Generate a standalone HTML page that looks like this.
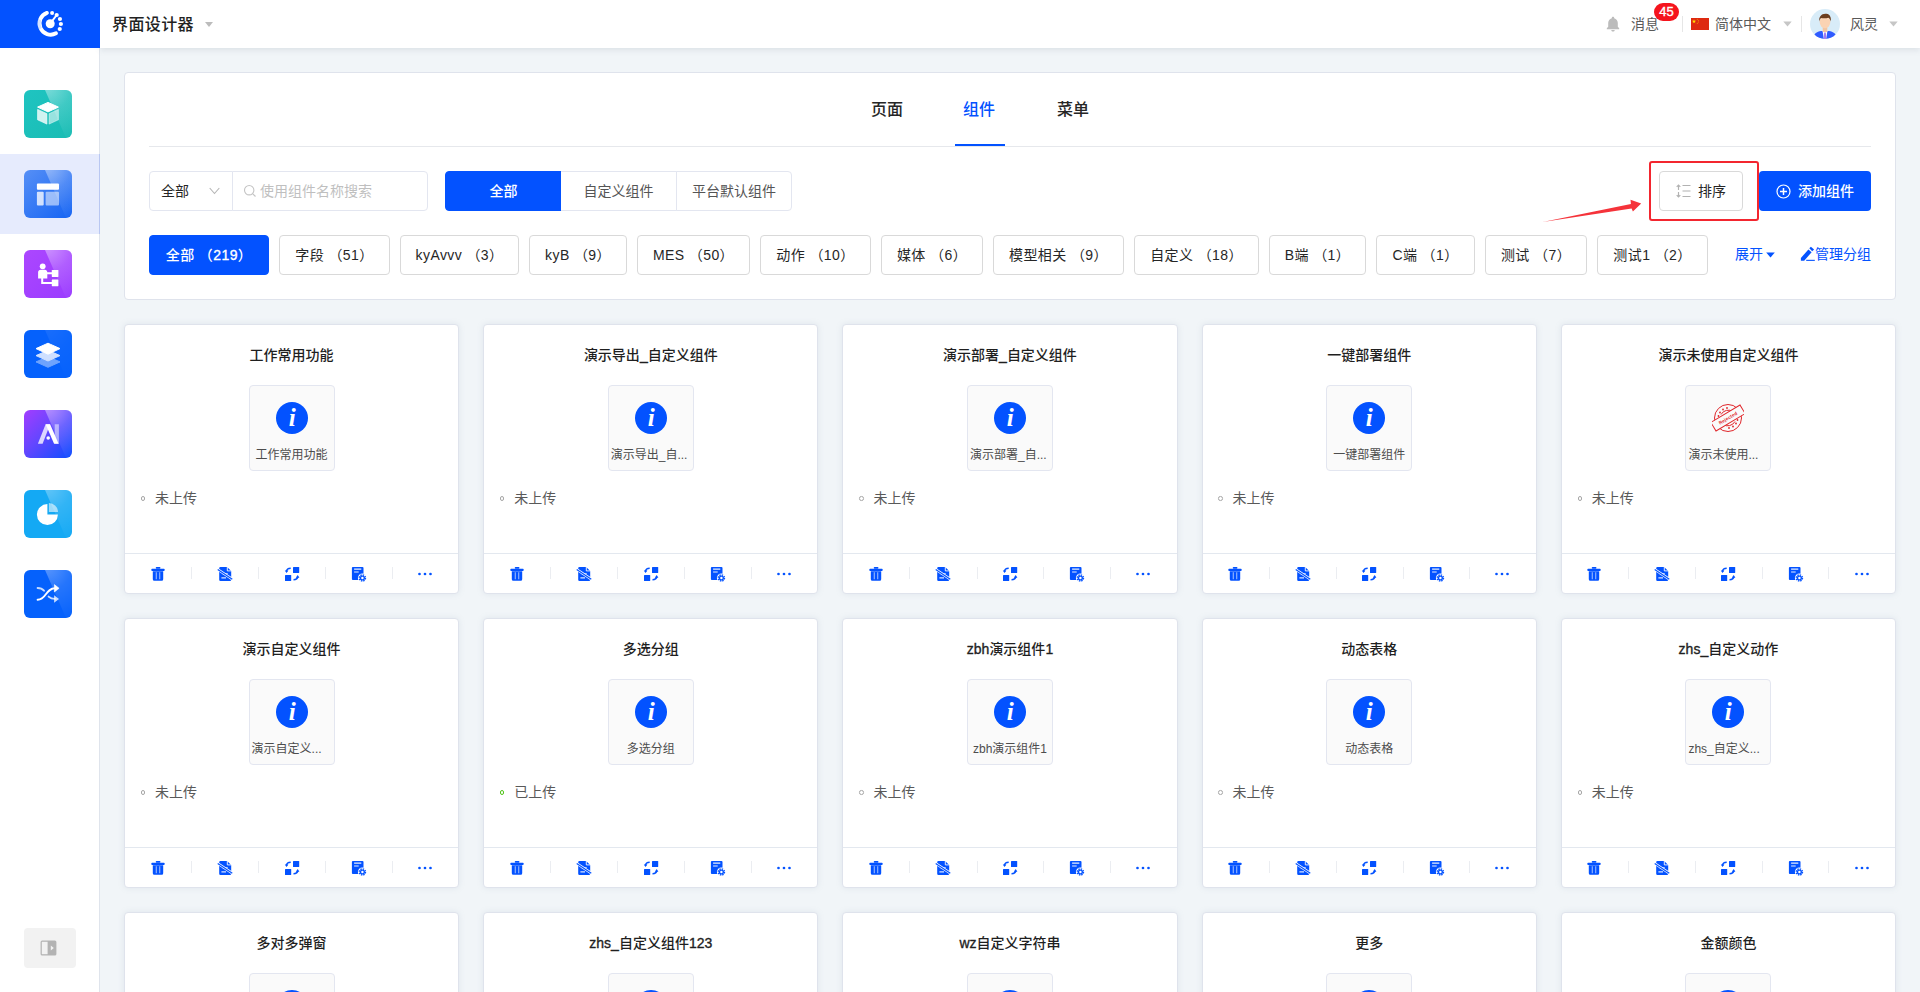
<!DOCTYPE html>
<html lang="zh-CN"><head><meta charset="utf-8"><title>界面设计器</title>
<style>
*{box-sizing:border-box;margin:0;padding:0}
html,body{width:1920px;height:992px;overflow:hidden}
body{font-family:"Liberation Sans","Noto Sans CJK SC",sans-serif;font-size:14px;color:rgba(0,0,0,.85);background:#f1f5f8;position:relative}
.abs{position:absolute}
#side{position:absolute;left:0;top:0;width:100px;height:992px;background:#fff;border-right:1px solid #dfe4ec}
#logo{position:absolute;left:0;top:0;width:100px;height:48px;background:#0352ff}
#top{position:absolute;left:100px;top:0;width:1820px;height:48px;background:#fff;box-shadow:0 2px 6px rgba(110,125,140,.17)}
#sel{position:absolute;left:0;top:154px;width:100px;height:80px;background:#e6ebfd;border-right:1px solid #b9c7f2}
.sico{position:absolute;left:24px;width:48px;height:48px;border-radius:6px;overflow:hidden}
.sico svg{display:block}
#coll{position:absolute;left:24px;top:928px;width:52px;height:40px;background:#f2f2f2;border-radius:4px}
#panel{position:absolute;left:124px;top:72px;width:1772px;height:228px;background:#fff;border:1px solid #dfe3ec;border-radius:4px}
.card{position:absolute;width:335.2px;height:270px;background:#fff;border:1px solid #dfe3ec;border-radius:4px;box-shadow:0 0 6px rgba(125,145,165,.15)}
.ctitle{position:absolute;left:0;right:0;top:19px;height:22px;line-height:22px;text-align:center;font-weight:500;font-size:14px;color:#1f1f1f}
.pv{position:absolute;left:123.600px;top:60px;width:86px;height:86px;background:#fafafa;border:1px solid #e3e6f0;border-radius:4px}
.pic{position:absolute;left:26px;top:16px;width:32px;height:32px}
.plabel{position:absolute;left:0;right:0;top:59px;height:20px;line-height:20px;text-align:center;font-size:12px;color:#4d4d4d;white-space:nowrap}
.plabel.tr{text-align:left;padding-left:2px}
.status{position:absolute;left:30px;top:162px;height:22px;line-height:22px;font-size:14px;color:#595959}
.dot{position:absolute;left:-14.300px;top:9.300px;width:4.600px;height:4.600px;border:1px solid #a6a6a6;border-radius:50%}
.dot.up{border-color:#52c41a}
.foot{position:absolute;left:0;right:0;top:228px;height:40px;border-top:1px solid #e3e8ef;display:flex}
.fc{flex:1;position:relative;color:#0352ff;display:block}
.fc+.fc:before{content:"";position:absolute;left:0;top:13px;height:12px;width:1px;background:#ebedf1}
.fc:nth-child(2):before{left:-.6px}
.fc:nth-child(1) .fi{margin-left:-8.700px}
.fc:nth-child(4) .fi{margin-left:-7.200px}
.fi{position:absolute;left:50%;top:50%;width:16px;height:16px;margin:-8px 0 0 -8px}
.lm{-webkit-text-stroke:.35px currentColor}
.tab{position:absolute;top:98px;height:24px;line-height:24px;font-size:16px;font-weight:500;color:#262626;white-space:nowrap}
.tag{position:absolute;top:235px;height:40px;line-height:38px;border:1px solid #d9d9d9;border-radius:4px;text-align:center;font-size:14px;letter-spacing:.4px;color:#262626;background:#fff;white-space:nowrap}
.tag.on{background:#0352ff;border-color:#0352ff;color:#fff;font-weight:500}
.rb{position:absolute;top:171px;height:40px;line-height:38px;text-align:center;font-size:14px;color:#555;border:1px solid #e3e6f0;background:#fff;white-space:nowrap}
.t{position:absolute;white-space:nowrap}
</style></head><body>
<svg width="0" height="0" style="position:absolute"><defs><radialGradient id="hl" gradientUnits="userSpaceOnUse" cx="23" cy="-3" r="54"><stop offset="0" stop-color="#fff" stop-opacity=".42"/><stop offset=".45" stop-color="#fff" stop-opacity=".16"/><stop offset="1" stop-color="#fff" stop-opacity=".02"/></radialGradient></defs></svg>
<div id="side">
<div id="sel"></div>
<div class="sico" style="top:90px;background:linear-gradient(135deg,#1fc4c1,#19bcb3)"><svg viewBox="0 0 48 48" width="48" height="48"><polygon points="21,0 48,0 48,48 42,48" fill="url(#hl)" opacity="1.0"/><path d="M24 12.400l10.400 4.700L24 21.900l-10.400-4.800z" fill="#fff" stroke="#fff" stroke-width="1" stroke-linejoin="round"/><path d="M13.600 19.400l9.300 4.300v10.400l-9.300-4.300z" fill="#fff" fill-opacity=".8" stroke="#fff" stroke-opacity=".8" stroke-width=".8" stroke-linejoin="round"/><path d="M34.400 19.400l-9.300 4.300v10.400l9.300-4.300z" fill="#fff" fill-opacity=".55" stroke="#fff" stroke-opacity=".55" stroke-width=".8" stroke-linejoin="round"/></svg></div><div class="sico" style="top:170px;background:linear-gradient(135deg,#568ff6,#1463f3)"><svg viewBox="0 0 48 48" width="48" height="48"><polygon points="21,0 48,0 48,48 42,48" fill="url(#hl)" opacity="1.0"/><rect x="12.900" y="13.500" width="22.100" height="6.300" rx="1" fill="#fff"/><rect x="12.900" y="21.800" width="6.800" height="13.600" rx="1" fill="#fff" opacity=".78"/><rect x="21.600" y="21.800" width="13.400" height="13.600" rx="1" fill="#fff" opacity=".52"/></svg></div><div class="sico" style="top:250px;background:linear-gradient(135deg,#ac47ff,#9a3bff)"><svg viewBox="0 0 48 48" width="48" height="48"><polygon points="21,0 48,0 48,48 42,48" fill="url(#hl)" opacity="1.0"/><circle cx="18.700" cy="16.300" r="2.900" fill="#fff"/><path d="M14.100 22.300c0-1.400 1.100-2.500 2.500-2.500h4.200c1.400 0 2.500 1.100 2.500 2.500v6.100h-9.200z" fill="#fff"/><path d="M23 23.300h6M18.200 28v5h10.500" stroke="#fff" stroke-width="2" fill="none"/><rect x="27.800" y="20" width="6.600" height="7" rx=".4" fill="#fff"/><rect x="27.800" y="29.600" width="6.600" height="6.600" rx=".4" fill="#fff"/></svg></div><div class="sico" style="top:330px;background:#0561fc"><svg viewBox="0 0 48 48" width="48" height="48"><polygon points="21,0 48,0 48,48 42,48" fill="url(#hl)" opacity="0.2"/><path d="M24 26.600l12 5.300-12 5.400-12-5.400z" fill="#fff" opacity=".42" stroke="#fff" stroke-width="1" stroke-linejoin="round"/><path d="M24 20.300l12 5.300-12 5.400-12-5.400z" fill="#cfe0ff" stroke="#cfe0ff" stroke-width="1" stroke-linejoin="round"/><path d="M24 13.200l12 5.400-12 5.600-12-5.600z" fill="#fff" stroke="#fff" stroke-width="1" stroke-linejoin="round"/></svg></div><div class="sico" style="top:410px;background:linear-gradient(135deg,#a33dff 0%,#6446ff 45%,#0c4dff 100%)"><svg viewBox="0 0 48 48" width="48" height="48"><polygon points="21,0 48,0 48,48 42,48" fill="url(#hl)" opacity="1.0"/><path d="M30.700 14.300h4.200v19.500h-4.200z" fill="#fff" opacity=".5"/><path d="M21.600 14.300h4.500L18.600 33.800h-4.700z" fill="#fff" opacity=".78"/><path d="M21.600 14.300h4.500l8.500 19.500h-4.500z" fill="#fff"/><circle cx="24.200" cy="28" r="1.800" fill="#fff"/></svg></div><div class="sico" style="top:490px;background:#14a9f4"><svg viewBox="0 0 48 48" width="48" height="48"><polygon points="21,0 48,0 48,48 42,48" fill="url(#hl)" opacity="0.8"/><path d="M23.400 14.100a10.500 10.500 0 1 0 10.500 10.500H23.400z" fill="#fff"/><path d="M24.900 13a9.100 9.100 0 0 1 9.100 9.100H24.900z" fill="#fff" opacity=".58"/></svg></div><div class="sico" style="top:570px;background:#0561fc"><svg viewBox="0 0 48 48" width="48" height="48"><polygon points="21,0 48,0 48,48 42,48" fill="url(#hl)" opacity="0.8"/><g fill="none" stroke="#fff" stroke-width="1.900" stroke-linecap="round" stroke-linejoin="round"><path d="M13.600 18c3.200 0 4.900 1 6.400 2.700M24.600 26.600c1.700 1.500 3.300 2.300 6.200 2.300" opacity=".78"/><path d="M13.600 29.800c9 0 7.600-11.500 17.600-11.500"/></g><path d="M30.400 14.600l4.700 3.700-4.700 3.700z" fill="#fff" stroke="#fff" stroke-width=".6" stroke-linejoin="round"/><path d="M30.100 25.200l4.900 3.700-4.900 3.800z" fill="#fff" opacity=".78"/></svg></div>
<div id="coll"><svg class="abs" style="left:16px;top:12px" width="17" height="16" viewBox="0 0 17 16"><rect x=".6" y=".6" width="15.800" height="14.800" rx="1.500" fill="#b3b3b3"/><rect x="1.800" y="1.800" width="5.800" height="12.400" fill="#f2f2f2"/><path d="M10.800 5.500l3 2.500-3 2.500z" fill="#f2f2f2"/></svg></div>
</div>
<div id="top">
<div class="t" style="left:12px;top:13px;font-size:16px;line-height:24px;font-weight:500;letter-spacing:.4px;color:#222">界面设计器</div>
<svg class="abs" style="left:105px;top:21.500px" width="8" height="5" viewBox="0 0 8 5"><path d="M0 0h8L4 5z" fill="#bcbcbc"/></svg>
<svg class="abs" style="left:1506px;top:16px" width="14" height="16" viewBox="0 0 14 16"><path fill="#bcbcbc" d="M7 .8c.7 0 1.200.5 1.200 1.100v.3c2.200.6 3.600 2.500 3.600 4.900v3.600l1.400 1.600v.9H.8v-.9l1.400-1.600V7.100c0-2.400 1.400-4.300 3.600-4.900v-.3C5.800 1.300 6.300.8 7 .8zM5.300 13.900h3.400c0 .9-.8 1.600-1.700 1.600s-1.700-.7-1.700-1.600z"/></svg>
<div class="t" style="left:1531px;top:13px;font-size:14px;line-height:22px;color:#595959">消息</div>
<div class="abs" style="left:1554px;top:3px;width:25px;height:18px;border-radius:9px;background:#f5141d;color:#fff;font-size:13px;line-height:18px;text-align:center"><span class="lm">45</span></div>
<div class="abs" style="left:1582px;top:16px;width:1px;height:16px;background:#e6e6e6"></div>
<svg class="abs" style="left:1591px;top:18px" width="18" height="12" viewBox="0 0 18 12"><rect width="18" height="12" fill="#de2910"/><polygon points="3,1.200 3.530,2.700 5.100,2.700 3.850,3.650 4.300,5.200 3,4.250 1.700,5.200 2.150,3.650 0.900,2.700 2.470,2.700" fill="#ffde00"/><circle cx="6.200" cy="1.200" r=".45" fill="#ffde00"/><circle cx="7.300" cy="2.400" r=".45" fill="#ffde00"/><circle cx="7.300" cy="4" r=".45" fill="#ffde00"/><circle cx="6.200" cy="5.200" r=".45" fill="#ffde00"/></svg>
<div class="t" style="left:1615px;top:13px;font-size:14px;line-height:22px;color:#595959">简体中文</div>
<svg class="abs" style="left:1683px;top:21px" width="9" height="6" viewBox="0 0 9 6"><path d="M.3 .4h8.400L4.500 5.600z" fill="#c6c6c6"/></svg>
<div class="abs" style="left:1701px;top:16px;width:1px;height:16px;background:#e6e6e6"></div>
<svg class="abs" style="left:1710px;top:9px" width="30" height="30" viewBox="0 0 30 30"><defs><clipPath id="av"><circle cx="15" cy="15" r="15"/></clipPath></defs><g clip-path="url(#av)"><rect width="30" height="30" fill="#d8ecf8"/><path d="M3 30c0-5 4-7.500 8-8h8c4 .5 8 3 8 8z" fill="#2f5bff"/><path d="M12.500 21.500h5l-1.300 8.500h-2.400z" fill="#fff"/><path d="M14.200 23.500h1.600l.6 6.500h-2.800z" fill="#a37bf0"/><rect x="12.700" y="17" width="4.600" height="6" fill="#f3c5a2"/><ellipse cx="15" cy="13" rx="5.300" ry="6.200" fill="#fbd3b3"/><path d="M9.300 12.500c-.6-4.500 2-7.700 6-7.700 3.300 0 6.200 1.700 5.600 7.700-.8-2.200-1.500-3.200-2.500-3.800-2.300.9-5.600.8-7.400.2-.9.800-1.400 2-1.700 3.600z" fill="#6b3d1e"/></g></svg>
<div class="t" style="left:1750px;top:13px;font-size:14px;line-height:22px;color:#595959">风灵</div>
<svg class="abs" style="left:1789px;top:21px" width="9" height="6" viewBox="0 0 9 6"><path d="M.3 .4h8.400L4.500 5.600z" fill="#c6c6c6"/></svg>
</div>
<div id="logo"><svg class="abs" style="left:34px;top:9px" width="32" height="30" viewBox="0 0 32 30"><path d="M12.900 3.900A11.200 11.200 0 1 0 22 24.300" fill="none" stroke="#fff" stroke-width="3.900" stroke-linecap="round"/><path d="M5.400 10.500A11.400 11.400 0 0 0 6 20" fill="none" stroke="#0352ff" stroke-opacity=".16" stroke-width="3.900"/><circle cx="16.200" cy="14.700" r="4.500" fill="#fff"/><path d="M16.200 14.700L22.700 6" stroke="#fff" stroke-width="2" stroke-linecap="round"/><circle cx="18.100" cy="4.100" r="2" fill="#fff"/><circle cx="22.700" cy="6" r="2.100" fill="#fff"/><circle cx="25.950" cy="10" r="2.100" fill="#fff"/><circle cx="26.900" cy="15" r="2.100" fill="#fff"/><circle cx="25.750" cy="20" r="2.100" fill="#fff"/></svg></div>

<div id="panel"></div>
<div class="tab" style="left:871px">页面</div>
<div class="tab" style="left:963px;color:#0352ff">组件</div>
<div class="tab" style="left:1057px">菜单</div>
<div class="abs" style="left:149px;top:146px;width:1722px;height:1px;background:#e6e8ec"></div>
<div class="abs" style="left:955px;top:144px;width:50px;height:2px;background:#0352ff"></div>

<div class="abs" style="left:149px;top:171px;width:84px;height:40px;border:1px solid #e3e6f0;border-radius:4px 0 0 4px;background:#fff"></div>
<div class="t" style="left:161px;top:180px;line-height:22px;color:#262626">全部</div>
<svg class="abs" style="left:209px;top:187px" width="11" height="8" viewBox="0 0 11 8"><path d="M.7 1l4.800 5.500L10.300 1" fill="none" stroke="#b5b5b5" stroke-width="1.100"/></svg>
<div class="abs" style="left:232px;top:171px;width:196px;height:40px;border:1px solid #e3e6f0;border-radius:0 4px 4px 0;background:#fff"></div>
<svg class="abs" style="left:243px;top:184px" width="14" height="14" viewBox="0 0 14 14"><circle cx="6.200" cy="6.200" r="4.700" fill="none" stroke="#c4c4c4" stroke-width="1.100"/><path d="M9.800 9.800l2.700 2.700" stroke="#c4c4c4" stroke-width="1.100"/></svg>
<div class="t" style="left:260px;top:180px;line-height:22px;color:#bfbfbf">使用组件名称搜索</div>

<div class="rb" style="left:445px;width:117px;border-radius:4px 0 0 4px;background:#0352ff;border-color:#0352ff;color:#fff;font-weight:500">全部</div>
<div class="rb" style="left:561px;width:116px;border-left:none">自定义组件</div>
<div class="rb" style="left:676px;width:116px;border-radius:0 4px 4px 0">平台默认组件</div>

<svg class="abs" style="left:1540px;top:195px" width="105" height="30" viewBox="0 0 105 30"><polygon points="2.700,26.900 90.900,9 90.500,4.700 101.200,8.600 92.900,16.500 91.600,13.500" fill="#f5333a"/></svg>
<div class="abs" style="left:1649px;top:161px;width:110px;height:60px;border:2px solid #f3262f;border-radius:3px"></div>
<div class="abs" style="left:1659px;top:171px;width:84px;height:40px;border:1px solid #d9d9d9;border-radius:4px;background:#fff"></div>
<svg class="abs" style="left:1676px;top:184px" width="15" height="14" viewBox="0 0 15 14"><g fill="none" stroke="#b2b2b2" stroke-width="1.150"><path d="M2.500 1v5M.7 2.800L2.500 1l1.800 1.800M2.500 13V8M.7 11.200L2.500 13l1.800-1.800M6.500 1.500h8M6.500 7h8M6.500 12.500h8"/></g></svg>
<div class="t" style="left:1698px;top:180px;line-height:22px;color:#262626">排序</div>
<div class="abs" style="left:1759px;top:171px;width:112px;height:40px;border-radius:4px;background:#0352ff"></div>
<svg class="abs" style="left:1776px;top:184px" width="15" height="15" viewBox="0 0 15 15"><circle cx="7.500" cy="7.500" r="6.500" fill="none" stroke="#fff" stroke-width="1.200"/><path d="M4 7.500h7M7.500 4v7" stroke="#fff" stroke-width="1.500"/></svg>
<div class="t" style="left:1798px;top:180px;line-height:22px;color:#fff;font-weight:500">添加组件</div>

<div class="tag on" style="left:149px;width:120px">全部 （<span class="lm">219</span>）</div><div class="tag" style="left:279px;width:111px">字段 （51）</div><div class="tag" style="left:400px;width:119px">kyAvvv （3）</div><div class="tag" style="left:529px;width:98px">kyB （9）</div><div class="tag" style="left:637px;width:113px">MES （50）</div><div class="tag" style="left:760px;width:111px">动作 （10）</div><div class="tag" style="left:881px;width:102px">媒体 （6）</div><div class="tag" style="left:993px;width:131px">模型相关 （9）</div><div class="tag" style="left:1134px;width:125px">自定义 （18）</div><div class="tag" style="left:1269px;width:97px">B端 （1）</div><div class="tag" style="left:1376px;width:99px">C端 （1）</div><div class="tag" style="left:1485px;width:102px">测试 （7）</div><div class="tag" style="left:1597px;width:111px">测试1 （2）</div>
<div class="t" style="left:1735px;top:243px;line-height:22px;color:#0352ff">展开</div>
<svg class="abs" style="left:1765.500px;top:251.500px" width="9" height="6" viewBox="0 0 9 6"><path d="M.2 .5h8.600L4.500 5.500z" fill="#0352ff"/></svg>
<svg class="abs" style="left:1800px;top:246px" width="16" height="16" viewBox="0 0 16 16"><path d="M10.900 .8l3.200 2.800-1.900 1.700-2.900-3z" fill="#0352ff"/><path d="M8.400 3.400l3.200 2.800-7.400 8.600H.9V12z" fill="#0352ff"/><path d="M6.200 14.350h8.600" stroke="#0352ff" stroke-width="1.100"/></svg>
<div class="t" style="left:1815px;top:243px;line-height:22px;color:#0352ff">管理分组</div>

<div class="card" style="left:124.0px;top:324px">
<div class="ctitle">工作常用功能</div>
<div class="pv"><svg class="pic" viewBox="0 0 32 32"><circle cx="16" cy="16" r="16" fill="#0352ff"/><text x="16.300" y="24.300" text-anchor="middle" font-family="Liberation Serif, serif" font-style="italic" font-weight="bold" font-size="25" fill="#fff">i</text></svg><div class="plabel">工作常用功能</div></div>
<div class="status"><span class="dot"></span>未上传</div>
<div class="foot"><span class="fc"><svg class="fi" viewBox="0 0 16 16"><rect x="5.800" y=".9" width="4.600" height="1.800" rx=".7" fill="currentColor"/><rect x="1.300" y="2.800" width="13.400" height="2.100" rx=".9" fill="currentColor"/><path fill="currentColor" d="M2.800 5.300h10.400v8a1.500 1.500 0 0 1-1.500 1.500H4.300a1.500 1.500 0 0 1-1.500-1.500z"/><path stroke="#fff" stroke-opacity=".55" stroke-width="1.200" d="M6.300 6.300v7M9.700 6.300v7"/></svg></span><span class="fc"><svg class="fi" viewBox="0 0 16 16"><path fill="currentColor" d="M2.200 2.200a1.300 1.300 0 0 1 1.300-1.300h6.600l4.100 4.100v8.700a1.300 1.300 0 0 1-1.300 1.300H3.500a1.300 1.300 0 0 1-1.300-1.300z"/><path d="M10.300 .6v4.300h4.300" fill="none" stroke="#fff" stroke-width=".9"/><path stroke="#fff" stroke-opacity=".85" stroke-width="1.100" d="M5.200 7.700h5.600M4.400 11.900h4.600"/><path stroke="#fff" stroke-width="2.600" d="M.9 3.500l14.300 9.600"/><path stroke="currentColor" stroke-width="1.200" d="M.7 3.400l14.600 9.800"/></svg></span><span class="fc"><svg class="fi" viewBox="0 0 16 16"><rect x="9" y="1.100" width="6.200" height="6" rx=".5" fill="currentColor"/><rect x="1" y="9.100" width="6.200" height="6" rx=".5" fill="currentColor"/><path fill="none" stroke="currentColor" stroke-width="1.600" d="M6.700 2.300C4.300 2.300 2.700 3.600 2.500 5.400M9.500 13.800c2.400 0 4-1.300 4.200-3.100"/><path fill="currentColor" d="M.8 4.400h3.600L2.500 7zM15.400 11.700h-3.600l1.900-2.600z"/></svg></span><span class="fc"><svg class="fi" viewBox="0 0 16 16"><rect x=".9" y=".9" width="11.600" height="13" rx="1" fill="currentColor"/><path stroke="#fff" stroke-opacity=".9" stroke-width="1.200" d="M3.100 3.200h7.200M3.100 6h4.600"/><circle cx="11.400" cy="12" r="4.500" fill="#fff"/><circle cx="11.400" cy="12" r="2.600" fill="currentColor"/><circle cx="11.400" cy="12" r="3.100" fill="none" stroke="currentColor" stroke-width="1.400" stroke-dasharray="1.400 1.030"/><circle cx="11.400" cy="12" r="1.200" fill="#fff"/></svg></span><span class="fc"><svg class="fi" viewBox="0 0 16 16"><circle cx="2.500" cy="8" r="1.350" fill="currentColor"/><circle cx="8" cy="8" r="1.350" fill="currentColor"/><circle cx="13.500" cy="8" r="1.350" fill="currentColor"/></svg></span></div>
</div><div class="card" style="left:483.2px;top:324px">
<div class="ctitle">演示导出<span class="lm">_</span>自定义组件</div>
<div class="pv"><svg class="pic" viewBox="0 0 32 32"><circle cx="16" cy="16" r="16" fill="#0352ff"/><text x="16.300" y="24.300" text-anchor="middle" font-family="Liberation Serif, serif" font-style="italic" font-weight="bold" font-size="25" fill="#fff">i</text></svg><div class="plabel tr">演示导出_自...</div></div>
<div class="status"><span class="dot"></span>未上传</div>
<div class="foot"><span class="fc"><svg class="fi" viewBox="0 0 16 16"><rect x="5.800" y=".9" width="4.600" height="1.800" rx=".7" fill="currentColor"/><rect x="1.300" y="2.800" width="13.400" height="2.100" rx=".9" fill="currentColor"/><path fill="currentColor" d="M2.800 5.300h10.400v8a1.500 1.500 0 0 1-1.500 1.500H4.300a1.500 1.500 0 0 1-1.500-1.500z"/><path stroke="#fff" stroke-opacity=".55" stroke-width="1.200" d="M6.300 6.300v7M9.700 6.300v7"/></svg></span><span class="fc"><svg class="fi" viewBox="0 0 16 16"><path fill="currentColor" d="M2.200 2.200a1.300 1.300 0 0 1 1.300-1.300h6.600l4.100 4.100v8.700a1.300 1.300 0 0 1-1.300 1.300H3.500a1.300 1.300 0 0 1-1.300-1.300z"/><path d="M10.300 .6v4.300h4.300" fill="none" stroke="#fff" stroke-width=".9"/><path stroke="#fff" stroke-opacity=".85" stroke-width="1.100" d="M5.200 7.700h5.600M4.400 11.900h4.600"/><path stroke="#fff" stroke-width="2.600" d="M.9 3.500l14.300 9.600"/><path stroke="currentColor" stroke-width="1.200" d="M.7 3.400l14.600 9.800"/></svg></span><span class="fc"><svg class="fi" viewBox="0 0 16 16"><rect x="9" y="1.100" width="6.200" height="6" rx=".5" fill="currentColor"/><rect x="1" y="9.100" width="6.200" height="6" rx=".5" fill="currentColor"/><path fill="none" stroke="currentColor" stroke-width="1.600" d="M6.700 2.300C4.300 2.300 2.700 3.600 2.500 5.400M9.500 13.800c2.400 0 4-1.300 4.200-3.100"/><path fill="currentColor" d="M.8 4.400h3.600L2.500 7zM15.400 11.700h-3.600l1.900-2.600z"/></svg></span><span class="fc"><svg class="fi" viewBox="0 0 16 16"><rect x=".9" y=".9" width="11.600" height="13" rx="1" fill="currentColor"/><path stroke="#fff" stroke-opacity=".9" stroke-width="1.200" d="M3.100 3.200h7.200M3.100 6h4.600"/><circle cx="11.400" cy="12" r="4.500" fill="#fff"/><circle cx="11.400" cy="12" r="2.600" fill="currentColor"/><circle cx="11.400" cy="12" r="3.100" fill="none" stroke="currentColor" stroke-width="1.400" stroke-dasharray="1.400 1.030"/><circle cx="11.400" cy="12" r="1.200" fill="#fff"/></svg></span><span class="fc"><svg class="fi" viewBox="0 0 16 16"><circle cx="2.500" cy="8" r="1.350" fill="currentColor"/><circle cx="8" cy="8" r="1.350" fill="currentColor"/><circle cx="13.500" cy="8" r="1.350" fill="currentColor"/></svg></span></div>
</div><div class="card" style="left:842.4px;top:324px">
<div class="ctitle">演示部署<span class="lm">_</span>自定义组件</div>
<div class="pv"><svg class="pic" viewBox="0 0 32 32"><circle cx="16" cy="16" r="16" fill="#0352ff"/><text x="16.300" y="24.300" text-anchor="middle" font-family="Liberation Serif, serif" font-style="italic" font-weight="bold" font-size="25" fill="#fff">i</text></svg><div class="plabel tr">演示部署_自...</div></div>
<div class="status"><span class="dot"></span>未上传</div>
<div class="foot"><span class="fc"><svg class="fi" viewBox="0 0 16 16"><rect x="5.800" y=".9" width="4.600" height="1.800" rx=".7" fill="currentColor"/><rect x="1.300" y="2.800" width="13.400" height="2.100" rx=".9" fill="currentColor"/><path fill="currentColor" d="M2.800 5.300h10.400v8a1.500 1.500 0 0 1-1.500 1.500H4.300a1.500 1.500 0 0 1-1.500-1.500z"/><path stroke="#fff" stroke-opacity=".55" stroke-width="1.200" d="M6.300 6.300v7M9.700 6.300v7"/></svg></span><span class="fc"><svg class="fi" viewBox="0 0 16 16"><path fill="currentColor" d="M2.200 2.200a1.300 1.300 0 0 1 1.300-1.300h6.600l4.100 4.100v8.700a1.300 1.300 0 0 1-1.300 1.300H3.500a1.300 1.300 0 0 1-1.300-1.300z"/><path d="M10.300 .6v4.300h4.300" fill="none" stroke="#fff" stroke-width=".9"/><path stroke="#fff" stroke-opacity=".85" stroke-width="1.100" d="M5.200 7.700h5.600M4.400 11.900h4.600"/><path stroke="#fff" stroke-width="2.600" d="M.9 3.500l14.300 9.600"/><path stroke="currentColor" stroke-width="1.200" d="M.7 3.400l14.600 9.800"/></svg></span><span class="fc"><svg class="fi" viewBox="0 0 16 16"><rect x="9" y="1.100" width="6.200" height="6" rx=".5" fill="currentColor"/><rect x="1" y="9.100" width="6.200" height="6" rx=".5" fill="currentColor"/><path fill="none" stroke="currentColor" stroke-width="1.600" d="M6.700 2.300C4.300 2.300 2.700 3.600 2.500 5.400M9.500 13.800c2.400 0 4-1.300 4.200-3.100"/><path fill="currentColor" d="M.8 4.400h3.600L2.500 7zM15.400 11.700h-3.600l1.900-2.600z"/></svg></span><span class="fc"><svg class="fi" viewBox="0 0 16 16"><rect x=".9" y=".9" width="11.600" height="13" rx="1" fill="currentColor"/><path stroke="#fff" stroke-opacity=".9" stroke-width="1.200" d="M3.100 3.200h7.200M3.100 6h4.600"/><circle cx="11.400" cy="12" r="4.500" fill="#fff"/><circle cx="11.400" cy="12" r="2.600" fill="currentColor"/><circle cx="11.400" cy="12" r="3.100" fill="none" stroke="currentColor" stroke-width="1.400" stroke-dasharray="1.400 1.030"/><circle cx="11.400" cy="12" r="1.200" fill="#fff"/></svg></span><span class="fc"><svg class="fi" viewBox="0 0 16 16"><circle cx="2.500" cy="8" r="1.350" fill="currentColor"/><circle cx="8" cy="8" r="1.350" fill="currentColor"/><circle cx="13.500" cy="8" r="1.350" fill="currentColor"/></svg></span></div>
</div><div class="card" style="left:1201.6px;top:324px">
<div class="ctitle">一键部署组件</div>
<div class="pv"><svg class="pic" viewBox="0 0 32 32"><circle cx="16" cy="16" r="16" fill="#0352ff"/><text x="16.300" y="24.300" text-anchor="middle" font-family="Liberation Serif, serif" font-style="italic" font-weight="bold" font-size="25" fill="#fff">i</text></svg><div class="plabel">一键部署组件</div></div>
<div class="status"><span class="dot"></span>未上传</div>
<div class="foot"><span class="fc"><svg class="fi" viewBox="0 0 16 16"><rect x="5.800" y=".9" width="4.600" height="1.800" rx=".7" fill="currentColor"/><rect x="1.300" y="2.800" width="13.400" height="2.100" rx=".9" fill="currentColor"/><path fill="currentColor" d="M2.800 5.300h10.400v8a1.500 1.500 0 0 1-1.500 1.500H4.300a1.500 1.500 0 0 1-1.500-1.500z"/><path stroke="#fff" stroke-opacity=".55" stroke-width="1.200" d="M6.300 6.300v7M9.700 6.300v7"/></svg></span><span class="fc"><svg class="fi" viewBox="0 0 16 16"><path fill="currentColor" d="M2.200 2.200a1.300 1.300 0 0 1 1.300-1.300h6.600l4.100 4.100v8.700a1.300 1.300 0 0 1-1.300 1.300H3.500a1.300 1.300 0 0 1-1.300-1.300z"/><path d="M10.300 .6v4.300h4.300" fill="none" stroke="#fff" stroke-width=".9"/><path stroke="#fff" stroke-opacity=".85" stroke-width="1.100" d="M5.200 7.700h5.600M4.400 11.900h4.600"/><path stroke="#fff" stroke-width="2.600" d="M.9 3.500l14.300 9.600"/><path stroke="currentColor" stroke-width="1.200" d="M.7 3.400l14.600 9.800"/></svg></span><span class="fc"><svg class="fi" viewBox="0 0 16 16"><rect x="9" y="1.100" width="6.200" height="6" rx=".5" fill="currentColor"/><rect x="1" y="9.100" width="6.200" height="6" rx=".5" fill="currentColor"/><path fill="none" stroke="currentColor" stroke-width="1.600" d="M6.700 2.300C4.300 2.300 2.700 3.600 2.500 5.400M9.500 13.800c2.400 0 4-1.300 4.200-3.100"/><path fill="currentColor" d="M.8 4.400h3.600L2.500 7zM15.400 11.700h-3.600l1.900-2.600z"/></svg></span><span class="fc"><svg class="fi" viewBox="0 0 16 16"><rect x=".9" y=".9" width="11.600" height="13" rx="1" fill="currentColor"/><path stroke="#fff" stroke-opacity=".9" stroke-width="1.200" d="M3.100 3.200h7.200M3.100 6h4.600"/><circle cx="11.400" cy="12" r="4.500" fill="#fff"/><circle cx="11.400" cy="12" r="2.600" fill="currentColor"/><circle cx="11.400" cy="12" r="3.100" fill="none" stroke="currentColor" stroke-width="1.400" stroke-dasharray="1.400 1.030"/><circle cx="11.400" cy="12" r="1.200" fill="#fff"/></svg></span><span class="fc"><svg class="fi" viewBox="0 0 16 16"><circle cx="2.500" cy="8" r="1.350" fill="currentColor"/><circle cx="8" cy="8" r="1.350" fill="currentColor"/><circle cx="13.500" cy="8" r="1.350" fill="currentColor"/></svg></span></div>
</div><div class="card" style="left:1560.8px;top:324px">
<div class="ctitle">演示未使用自定义组件</div>
<div class="pv"><svg class="pic" viewBox="0 0 32 32"><g fill="none" stroke="#e0262b" stroke-width="1"><circle cx="16" cy="16" r="13.500"/><path d="M9 12.500a8.500 8.500 0 0 1 12-3M23 19.500a8.500 8.500 0 0 1-12 3"/></g><g fill="#e0262b"><circle cx="8" cy="10.500" r=".9"/><circle cx="11" cy="7.500" r=".9"/><circle cx="15" cy="6" r=".9"/><circle cx="24" cy="21.500" r=".9"/><circle cx="21" cy="24.500" r=".9"/><circle cx="17" cy="26" r=".9"/><circle cx="6.500" cy="14" r=".9"/><circle cx="25.500" cy="18" r=".9"/></g><g transform="rotate(-31 16 16)"><rect x="-1" y="11" width="34" height="10" fill="#fafafa" stroke="#e0262b" stroke-width="1"/><text x="16" y="17.700" text-anchor="middle" font-family="Liberation Sans, sans-serif" font-weight="bold" font-size="4.700" fill="#e0262b" letter-spacing=".15">Rejected</text></g></svg><div class="plabel tr">演示未使用...</div></div>
<div class="status"><span class="dot"></span>未上传</div>
<div class="foot"><span class="fc"><svg class="fi" viewBox="0 0 16 16"><rect x="5.800" y=".9" width="4.600" height="1.800" rx=".7" fill="currentColor"/><rect x="1.300" y="2.800" width="13.400" height="2.100" rx=".9" fill="currentColor"/><path fill="currentColor" d="M2.800 5.300h10.400v8a1.500 1.500 0 0 1-1.500 1.500H4.300a1.500 1.500 0 0 1-1.500-1.500z"/><path stroke="#fff" stroke-opacity=".55" stroke-width="1.200" d="M6.300 6.300v7M9.700 6.300v7"/></svg></span><span class="fc"><svg class="fi" viewBox="0 0 16 16"><path fill="currentColor" d="M2.200 2.200a1.300 1.300 0 0 1 1.300-1.300h6.600l4.100 4.100v8.700a1.300 1.300 0 0 1-1.300 1.300H3.500a1.300 1.300 0 0 1-1.300-1.300z"/><path d="M10.300 .6v4.300h4.300" fill="none" stroke="#fff" stroke-width=".9"/><path stroke="#fff" stroke-opacity=".85" stroke-width="1.100" d="M5.200 7.700h5.600M4.400 11.900h4.600"/><path stroke="#fff" stroke-width="2.600" d="M.9 3.500l14.300 9.600"/><path stroke="currentColor" stroke-width="1.200" d="M.7 3.400l14.600 9.800"/></svg></span><span class="fc"><svg class="fi" viewBox="0 0 16 16"><rect x="9" y="1.100" width="6.200" height="6" rx=".5" fill="currentColor"/><rect x="1" y="9.100" width="6.200" height="6" rx=".5" fill="currentColor"/><path fill="none" stroke="currentColor" stroke-width="1.600" d="M6.700 2.300C4.300 2.300 2.700 3.600 2.500 5.400M9.500 13.800c2.400 0 4-1.300 4.200-3.100"/><path fill="currentColor" d="M.8 4.400h3.600L2.500 7zM15.400 11.700h-3.600l1.900-2.600z"/></svg></span><span class="fc"><svg class="fi" viewBox="0 0 16 16"><rect x=".9" y=".9" width="11.600" height="13" rx="1" fill="currentColor"/><path stroke="#fff" stroke-opacity=".9" stroke-width="1.200" d="M3.100 3.200h7.200M3.100 6h4.600"/><circle cx="11.400" cy="12" r="4.500" fill="#fff"/><circle cx="11.400" cy="12" r="2.600" fill="currentColor"/><circle cx="11.400" cy="12" r="3.100" fill="none" stroke="currentColor" stroke-width="1.400" stroke-dasharray="1.400 1.030"/><circle cx="11.400" cy="12" r="1.200" fill="#fff"/></svg></span><span class="fc"><svg class="fi" viewBox="0 0 16 16"><circle cx="2.500" cy="8" r="1.350" fill="currentColor"/><circle cx="8" cy="8" r="1.350" fill="currentColor"/><circle cx="13.500" cy="8" r="1.350" fill="currentColor"/></svg></span></div>
</div><div class="card" style="left:124.0px;top:618px">
<div class="ctitle">演示自定义组件</div>
<div class="pv"><svg class="pic" viewBox="0 0 32 32"><circle cx="16" cy="16" r="16" fill="#0352ff"/><text x="16.300" y="24.300" text-anchor="middle" font-family="Liberation Serif, serif" font-style="italic" font-weight="bold" font-size="25" fill="#fff">i</text></svg><div class="plabel tr">演示自定义...</div></div>
<div class="status"><span class="dot"></span>未上传</div>
<div class="foot"><span class="fc"><svg class="fi" viewBox="0 0 16 16"><rect x="5.800" y=".9" width="4.600" height="1.800" rx=".7" fill="currentColor"/><rect x="1.300" y="2.800" width="13.400" height="2.100" rx=".9" fill="currentColor"/><path fill="currentColor" d="M2.800 5.300h10.400v8a1.500 1.500 0 0 1-1.500 1.500H4.300a1.500 1.500 0 0 1-1.500-1.500z"/><path stroke="#fff" stroke-opacity=".55" stroke-width="1.200" d="M6.300 6.300v7M9.700 6.300v7"/></svg></span><span class="fc"><svg class="fi" viewBox="0 0 16 16"><path fill="currentColor" d="M2.200 2.200a1.300 1.300 0 0 1 1.300-1.300h6.600l4.100 4.100v8.700a1.300 1.300 0 0 1-1.300 1.300H3.500a1.300 1.300 0 0 1-1.300-1.300z"/><path d="M10.300 .6v4.300h4.300" fill="none" stroke="#fff" stroke-width=".9"/><path stroke="#fff" stroke-opacity=".85" stroke-width="1.100" d="M5.200 7.700h5.600M4.400 11.900h4.600"/><path stroke="#fff" stroke-width="2.600" d="M.9 3.500l14.300 9.600"/><path stroke="currentColor" stroke-width="1.200" d="M.7 3.400l14.600 9.800"/></svg></span><span class="fc"><svg class="fi" viewBox="0 0 16 16"><rect x="9" y="1.100" width="6.200" height="6" rx=".5" fill="currentColor"/><rect x="1" y="9.100" width="6.200" height="6" rx=".5" fill="currentColor"/><path fill="none" stroke="currentColor" stroke-width="1.600" d="M6.700 2.300C4.300 2.300 2.700 3.600 2.500 5.400M9.500 13.800c2.400 0 4-1.300 4.200-3.100"/><path fill="currentColor" d="M.8 4.400h3.600L2.500 7zM15.400 11.700h-3.600l1.900-2.600z"/></svg></span><span class="fc"><svg class="fi" viewBox="0 0 16 16"><rect x=".9" y=".9" width="11.600" height="13" rx="1" fill="currentColor"/><path stroke="#fff" stroke-opacity=".9" stroke-width="1.200" d="M3.100 3.200h7.200M3.100 6h4.600"/><circle cx="11.400" cy="12" r="4.500" fill="#fff"/><circle cx="11.400" cy="12" r="2.600" fill="currentColor"/><circle cx="11.400" cy="12" r="3.100" fill="none" stroke="currentColor" stroke-width="1.400" stroke-dasharray="1.400 1.030"/><circle cx="11.400" cy="12" r="1.200" fill="#fff"/></svg></span><span class="fc"><svg class="fi" viewBox="0 0 16 16"><circle cx="2.500" cy="8" r="1.350" fill="currentColor"/><circle cx="8" cy="8" r="1.350" fill="currentColor"/><circle cx="13.500" cy="8" r="1.350" fill="currentColor"/></svg></span></div>
</div><div class="card" style="left:483.2px;top:618px">
<div class="ctitle">多选分组</div>
<div class="pv"><svg class="pic" viewBox="0 0 32 32"><circle cx="16" cy="16" r="16" fill="#0352ff"/><text x="16.300" y="24.300" text-anchor="middle" font-family="Liberation Serif, serif" font-style="italic" font-weight="bold" font-size="25" fill="#fff">i</text></svg><div class="plabel">多选分组</div></div>
<div class="status"><span class="dot up"></span>已上传</div>
<div class="foot"><span class="fc"><svg class="fi" viewBox="0 0 16 16"><rect x="5.800" y=".9" width="4.600" height="1.800" rx=".7" fill="currentColor"/><rect x="1.300" y="2.800" width="13.400" height="2.100" rx=".9" fill="currentColor"/><path fill="currentColor" d="M2.800 5.300h10.400v8a1.500 1.500 0 0 1-1.500 1.500H4.300a1.500 1.500 0 0 1-1.500-1.500z"/><path stroke="#fff" stroke-opacity=".55" stroke-width="1.200" d="M6.300 6.300v7M9.700 6.300v7"/></svg></span><span class="fc"><svg class="fi" viewBox="0 0 16 16"><path fill="currentColor" d="M2.200 2.200a1.300 1.300 0 0 1 1.300-1.300h6.600l4.100 4.100v8.700a1.300 1.300 0 0 1-1.300 1.300H3.500a1.300 1.300 0 0 1-1.300-1.300z"/><path d="M10.300 .6v4.300h4.300" fill="none" stroke="#fff" stroke-width=".9"/><path stroke="#fff" stroke-opacity=".85" stroke-width="1.100" d="M5.200 7.700h5.600M4.400 11.900h4.600"/><path stroke="#fff" stroke-width="2.600" d="M.9 3.500l14.300 9.600"/><path stroke="currentColor" stroke-width="1.200" d="M.7 3.400l14.600 9.800"/></svg></span><span class="fc"><svg class="fi" viewBox="0 0 16 16"><rect x="9" y="1.100" width="6.200" height="6" rx=".5" fill="currentColor"/><rect x="1" y="9.100" width="6.200" height="6" rx=".5" fill="currentColor"/><path fill="none" stroke="currentColor" stroke-width="1.600" d="M6.700 2.300C4.300 2.300 2.700 3.600 2.500 5.400M9.500 13.800c2.400 0 4-1.300 4.200-3.100"/><path fill="currentColor" d="M.8 4.400h3.600L2.500 7zM15.400 11.700h-3.600l1.900-2.600z"/></svg></span><span class="fc"><svg class="fi" viewBox="0 0 16 16"><rect x=".9" y=".9" width="11.600" height="13" rx="1" fill="currentColor"/><path stroke="#fff" stroke-opacity=".9" stroke-width="1.200" d="M3.100 3.200h7.200M3.100 6h4.600"/><circle cx="11.400" cy="12" r="4.500" fill="#fff"/><circle cx="11.400" cy="12" r="2.600" fill="currentColor"/><circle cx="11.400" cy="12" r="3.100" fill="none" stroke="currentColor" stroke-width="1.400" stroke-dasharray="1.400 1.030"/><circle cx="11.400" cy="12" r="1.200" fill="#fff"/></svg></span><span class="fc"><svg class="fi" viewBox="0 0 16 16"><circle cx="2.500" cy="8" r="1.350" fill="currentColor"/><circle cx="8" cy="8" r="1.350" fill="currentColor"/><circle cx="13.500" cy="8" r="1.350" fill="currentColor"/></svg></span></div>
</div><div class="card" style="left:842.4px;top:618px">
<div class="ctitle"><span class="lm">zbh</span>演示组件<span class="lm">1</span></div>
<div class="pv"><svg class="pic" viewBox="0 0 32 32"><circle cx="16" cy="16" r="16" fill="#0352ff"/><text x="16.300" y="24.300" text-anchor="middle" font-family="Liberation Serif, serif" font-style="italic" font-weight="bold" font-size="25" fill="#fff">i</text></svg><div class="plabel">zbh演示组件1</div></div>
<div class="status"><span class="dot"></span>未上传</div>
<div class="foot"><span class="fc"><svg class="fi" viewBox="0 0 16 16"><rect x="5.800" y=".9" width="4.600" height="1.800" rx=".7" fill="currentColor"/><rect x="1.300" y="2.800" width="13.400" height="2.100" rx=".9" fill="currentColor"/><path fill="currentColor" d="M2.800 5.300h10.400v8a1.500 1.500 0 0 1-1.500 1.500H4.300a1.500 1.500 0 0 1-1.500-1.500z"/><path stroke="#fff" stroke-opacity=".55" stroke-width="1.200" d="M6.300 6.300v7M9.700 6.300v7"/></svg></span><span class="fc"><svg class="fi" viewBox="0 0 16 16"><path fill="currentColor" d="M2.200 2.200a1.300 1.300 0 0 1 1.300-1.300h6.600l4.100 4.100v8.700a1.300 1.300 0 0 1-1.300 1.300H3.500a1.300 1.300 0 0 1-1.300-1.300z"/><path d="M10.300 .6v4.300h4.300" fill="none" stroke="#fff" stroke-width=".9"/><path stroke="#fff" stroke-opacity=".85" stroke-width="1.100" d="M5.200 7.700h5.600M4.400 11.900h4.600"/><path stroke="#fff" stroke-width="2.600" d="M.9 3.500l14.300 9.600"/><path stroke="currentColor" stroke-width="1.200" d="M.7 3.400l14.600 9.800"/></svg></span><span class="fc"><svg class="fi" viewBox="0 0 16 16"><rect x="9" y="1.100" width="6.200" height="6" rx=".5" fill="currentColor"/><rect x="1" y="9.100" width="6.200" height="6" rx=".5" fill="currentColor"/><path fill="none" stroke="currentColor" stroke-width="1.600" d="M6.700 2.300C4.300 2.300 2.700 3.600 2.500 5.400M9.500 13.800c2.400 0 4-1.300 4.200-3.100"/><path fill="currentColor" d="M.8 4.400h3.600L2.500 7zM15.400 11.700h-3.600l1.900-2.600z"/></svg></span><span class="fc"><svg class="fi" viewBox="0 0 16 16"><rect x=".9" y=".9" width="11.600" height="13" rx="1" fill="currentColor"/><path stroke="#fff" stroke-opacity=".9" stroke-width="1.200" d="M3.100 3.200h7.200M3.100 6h4.600"/><circle cx="11.400" cy="12" r="4.500" fill="#fff"/><circle cx="11.400" cy="12" r="2.600" fill="currentColor"/><circle cx="11.400" cy="12" r="3.100" fill="none" stroke="currentColor" stroke-width="1.400" stroke-dasharray="1.400 1.030"/><circle cx="11.400" cy="12" r="1.200" fill="#fff"/></svg></span><span class="fc"><svg class="fi" viewBox="0 0 16 16"><circle cx="2.500" cy="8" r="1.350" fill="currentColor"/><circle cx="8" cy="8" r="1.350" fill="currentColor"/><circle cx="13.500" cy="8" r="1.350" fill="currentColor"/></svg></span></div>
</div><div class="card" style="left:1201.6px;top:618px">
<div class="ctitle">动态表格</div>
<div class="pv"><svg class="pic" viewBox="0 0 32 32"><circle cx="16" cy="16" r="16" fill="#0352ff"/><text x="16.300" y="24.300" text-anchor="middle" font-family="Liberation Serif, serif" font-style="italic" font-weight="bold" font-size="25" fill="#fff">i</text></svg><div class="plabel">动态表格</div></div>
<div class="status"><span class="dot"></span>未上传</div>
<div class="foot"><span class="fc"><svg class="fi" viewBox="0 0 16 16"><rect x="5.800" y=".9" width="4.600" height="1.800" rx=".7" fill="currentColor"/><rect x="1.300" y="2.800" width="13.400" height="2.100" rx=".9" fill="currentColor"/><path fill="currentColor" d="M2.800 5.300h10.400v8a1.500 1.500 0 0 1-1.500 1.500H4.300a1.500 1.500 0 0 1-1.500-1.500z"/><path stroke="#fff" stroke-opacity=".55" stroke-width="1.200" d="M6.300 6.300v7M9.700 6.300v7"/></svg></span><span class="fc"><svg class="fi" viewBox="0 0 16 16"><path fill="currentColor" d="M2.200 2.200a1.300 1.300 0 0 1 1.300-1.300h6.600l4.100 4.100v8.700a1.300 1.300 0 0 1-1.300 1.300H3.500a1.300 1.300 0 0 1-1.300-1.300z"/><path d="M10.300 .6v4.300h4.300" fill="none" stroke="#fff" stroke-width=".9"/><path stroke="#fff" stroke-opacity=".85" stroke-width="1.100" d="M5.200 7.700h5.600M4.400 11.900h4.600"/><path stroke="#fff" stroke-width="2.600" d="M.9 3.500l14.300 9.600"/><path stroke="currentColor" stroke-width="1.200" d="M.7 3.400l14.600 9.800"/></svg></span><span class="fc"><svg class="fi" viewBox="0 0 16 16"><rect x="9" y="1.100" width="6.200" height="6" rx=".5" fill="currentColor"/><rect x="1" y="9.100" width="6.200" height="6" rx=".5" fill="currentColor"/><path fill="none" stroke="currentColor" stroke-width="1.600" d="M6.700 2.300C4.300 2.300 2.700 3.600 2.500 5.400M9.500 13.800c2.400 0 4-1.300 4.200-3.100"/><path fill="currentColor" d="M.8 4.400h3.600L2.500 7zM15.400 11.700h-3.600l1.900-2.600z"/></svg></span><span class="fc"><svg class="fi" viewBox="0 0 16 16"><rect x=".9" y=".9" width="11.600" height="13" rx="1" fill="currentColor"/><path stroke="#fff" stroke-opacity=".9" stroke-width="1.200" d="M3.100 3.200h7.200M3.100 6h4.600"/><circle cx="11.400" cy="12" r="4.500" fill="#fff"/><circle cx="11.400" cy="12" r="2.600" fill="currentColor"/><circle cx="11.400" cy="12" r="3.100" fill="none" stroke="currentColor" stroke-width="1.400" stroke-dasharray="1.400 1.030"/><circle cx="11.400" cy="12" r="1.200" fill="#fff"/></svg></span><span class="fc"><svg class="fi" viewBox="0 0 16 16"><circle cx="2.500" cy="8" r="1.350" fill="currentColor"/><circle cx="8" cy="8" r="1.350" fill="currentColor"/><circle cx="13.500" cy="8" r="1.350" fill="currentColor"/></svg></span></div>
</div><div class="card" style="left:1560.8px;top:618px">
<div class="ctitle"><span class="lm">zhs_</span>自定义动作</div>
<div class="pv"><svg class="pic" viewBox="0 0 32 32"><circle cx="16" cy="16" r="16" fill="#0352ff"/><text x="16.300" y="24.300" text-anchor="middle" font-family="Liberation Serif, serif" font-style="italic" font-weight="bold" font-size="25" fill="#fff">i</text></svg><div class="plabel tr">zhs_自定义...</div></div>
<div class="status"><span class="dot"></span>未上传</div>
<div class="foot"><span class="fc"><svg class="fi" viewBox="0 0 16 16"><rect x="5.800" y=".9" width="4.600" height="1.800" rx=".7" fill="currentColor"/><rect x="1.300" y="2.800" width="13.400" height="2.100" rx=".9" fill="currentColor"/><path fill="currentColor" d="M2.800 5.300h10.400v8a1.500 1.500 0 0 1-1.500 1.500H4.300a1.500 1.500 0 0 1-1.500-1.500z"/><path stroke="#fff" stroke-opacity=".55" stroke-width="1.200" d="M6.300 6.300v7M9.700 6.300v7"/></svg></span><span class="fc"><svg class="fi" viewBox="0 0 16 16"><path fill="currentColor" d="M2.200 2.200a1.300 1.300 0 0 1 1.300-1.300h6.600l4.100 4.100v8.700a1.300 1.300 0 0 1-1.300 1.300H3.500a1.300 1.300 0 0 1-1.300-1.300z"/><path d="M10.300 .6v4.300h4.300" fill="none" stroke="#fff" stroke-width=".9"/><path stroke="#fff" stroke-opacity=".85" stroke-width="1.100" d="M5.200 7.700h5.600M4.400 11.900h4.600"/><path stroke="#fff" stroke-width="2.600" d="M.9 3.500l14.300 9.600"/><path stroke="currentColor" stroke-width="1.200" d="M.7 3.400l14.600 9.800"/></svg></span><span class="fc"><svg class="fi" viewBox="0 0 16 16"><rect x="9" y="1.100" width="6.200" height="6" rx=".5" fill="currentColor"/><rect x="1" y="9.100" width="6.200" height="6" rx=".5" fill="currentColor"/><path fill="none" stroke="currentColor" stroke-width="1.600" d="M6.700 2.300C4.300 2.300 2.700 3.600 2.500 5.400M9.500 13.800c2.400 0 4-1.300 4.200-3.100"/><path fill="currentColor" d="M.8 4.400h3.600L2.500 7zM15.400 11.700h-3.600l1.900-2.600z"/></svg></span><span class="fc"><svg class="fi" viewBox="0 0 16 16"><rect x=".9" y=".9" width="11.600" height="13" rx="1" fill="currentColor"/><path stroke="#fff" stroke-opacity=".9" stroke-width="1.200" d="M3.100 3.200h7.200M3.100 6h4.600"/><circle cx="11.400" cy="12" r="4.500" fill="#fff"/><circle cx="11.400" cy="12" r="2.600" fill="currentColor"/><circle cx="11.400" cy="12" r="3.100" fill="none" stroke="currentColor" stroke-width="1.400" stroke-dasharray="1.400 1.030"/><circle cx="11.400" cy="12" r="1.200" fill="#fff"/></svg></span><span class="fc"><svg class="fi" viewBox="0 0 16 16"><circle cx="2.500" cy="8" r="1.350" fill="currentColor"/><circle cx="8" cy="8" r="1.350" fill="currentColor"/><circle cx="13.500" cy="8" r="1.350" fill="currentColor"/></svg></span></div>
</div><div class="card" style="left:124.0px;top:912px">
<div class="ctitle">多对多弹窗</div>
<div class="pv"><svg class="pic" viewBox="0 0 32 32"><circle cx="16" cy="16" r="16" fill="#0352ff"/><text x="16.300" y="24.300" text-anchor="middle" font-family="Liberation Serif, serif" font-style="italic" font-weight="bold" font-size="25" fill="#fff">i</text></svg><div class="plabel">多对多弹窗</div></div>
<div class="status"><span class="dot"></span>未上传</div>
<div class="foot"><span class="fc"><svg class="fi" viewBox="0 0 16 16"><rect x="5.800" y=".9" width="4.600" height="1.800" rx=".7" fill="currentColor"/><rect x="1.300" y="2.800" width="13.400" height="2.100" rx=".9" fill="currentColor"/><path fill="currentColor" d="M2.800 5.300h10.400v8a1.500 1.500 0 0 1-1.500 1.500H4.300a1.500 1.500 0 0 1-1.500-1.500z"/><path stroke="#fff" stroke-opacity=".55" stroke-width="1.200" d="M6.300 6.300v7M9.700 6.300v7"/></svg></span><span class="fc"><svg class="fi" viewBox="0 0 16 16"><path fill="currentColor" d="M2.200 2.200a1.300 1.300 0 0 1 1.300-1.300h6.600l4.100 4.100v8.700a1.300 1.300 0 0 1-1.300 1.300H3.500a1.300 1.300 0 0 1-1.300-1.300z"/><path d="M10.300 .6v4.300h4.300" fill="none" stroke="#fff" stroke-width=".9"/><path stroke="#fff" stroke-opacity=".85" stroke-width="1.100" d="M5.200 7.700h5.600M4.400 11.900h4.600"/><path stroke="#fff" stroke-width="2.600" d="M.9 3.500l14.300 9.600"/><path stroke="currentColor" stroke-width="1.200" d="M.7 3.400l14.600 9.800"/></svg></span><span class="fc"><svg class="fi" viewBox="0 0 16 16"><rect x="9" y="1.100" width="6.200" height="6" rx=".5" fill="currentColor"/><rect x="1" y="9.100" width="6.200" height="6" rx=".5" fill="currentColor"/><path fill="none" stroke="currentColor" stroke-width="1.600" d="M6.700 2.300C4.300 2.300 2.700 3.600 2.500 5.400M9.500 13.800c2.400 0 4-1.300 4.200-3.100"/><path fill="currentColor" d="M.8 4.400h3.600L2.500 7zM15.400 11.700h-3.600l1.900-2.600z"/></svg></span><span class="fc"><svg class="fi" viewBox="0 0 16 16"><rect x=".9" y=".9" width="11.600" height="13" rx="1" fill="currentColor"/><path stroke="#fff" stroke-opacity=".9" stroke-width="1.200" d="M3.100 3.200h7.200M3.100 6h4.600"/><circle cx="11.400" cy="12" r="4.500" fill="#fff"/><circle cx="11.400" cy="12" r="2.600" fill="currentColor"/><circle cx="11.400" cy="12" r="3.100" fill="none" stroke="currentColor" stroke-width="1.400" stroke-dasharray="1.400 1.030"/><circle cx="11.400" cy="12" r="1.200" fill="#fff"/></svg></span><span class="fc"><svg class="fi" viewBox="0 0 16 16"><circle cx="2.500" cy="8" r="1.350" fill="currentColor"/><circle cx="8" cy="8" r="1.350" fill="currentColor"/><circle cx="13.500" cy="8" r="1.350" fill="currentColor"/></svg></span></div>
</div><div class="card" style="left:483.2px;top:912px">
<div class="ctitle"><span class="lm">zhs_</span>自定义组件<span class="lm">123</span></div>
<div class="pv"><svg class="pic" viewBox="0 0 32 32"><circle cx="16" cy="16" r="16" fill="#0352ff"/><text x="16.300" y="24.300" text-anchor="middle" font-family="Liberation Serif, serif" font-style="italic" font-weight="bold" font-size="25" fill="#fff">i</text></svg><div class="plabel tr">zhs_自定义...</div></div>
<div class="status"><span class="dot"></span>未上传</div>
<div class="foot"><span class="fc"><svg class="fi" viewBox="0 0 16 16"><rect x="5.800" y=".9" width="4.600" height="1.800" rx=".7" fill="currentColor"/><rect x="1.300" y="2.800" width="13.400" height="2.100" rx=".9" fill="currentColor"/><path fill="currentColor" d="M2.800 5.300h10.400v8a1.500 1.500 0 0 1-1.500 1.500H4.300a1.500 1.500 0 0 1-1.500-1.500z"/><path stroke="#fff" stroke-opacity=".55" stroke-width="1.200" d="M6.300 6.300v7M9.700 6.300v7"/></svg></span><span class="fc"><svg class="fi" viewBox="0 0 16 16"><path fill="currentColor" d="M2.200 2.200a1.300 1.300 0 0 1 1.300-1.300h6.600l4.100 4.100v8.700a1.300 1.300 0 0 1-1.300 1.300H3.500a1.300 1.300 0 0 1-1.300-1.300z"/><path d="M10.300 .6v4.300h4.300" fill="none" stroke="#fff" stroke-width=".9"/><path stroke="#fff" stroke-opacity=".85" stroke-width="1.100" d="M5.200 7.700h5.600M4.400 11.900h4.600"/><path stroke="#fff" stroke-width="2.600" d="M.9 3.500l14.300 9.600"/><path stroke="currentColor" stroke-width="1.200" d="M.7 3.400l14.600 9.800"/></svg></span><span class="fc"><svg class="fi" viewBox="0 0 16 16"><rect x="9" y="1.100" width="6.200" height="6" rx=".5" fill="currentColor"/><rect x="1" y="9.100" width="6.200" height="6" rx=".5" fill="currentColor"/><path fill="none" stroke="currentColor" stroke-width="1.600" d="M6.700 2.300C4.300 2.300 2.700 3.600 2.500 5.400M9.500 13.800c2.400 0 4-1.300 4.200-3.100"/><path fill="currentColor" d="M.8 4.400h3.600L2.500 7zM15.400 11.700h-3.600l1.900-2.600z"/></svg></span><span class="fc"><svg class="fi" viewBox="0 0 16 16"><rect x=".9" y=".9" width="11.600" height="13" rx="1" fill="currentColor"/><path stroke="#fff" stroke-opacity=".9" stroke-width="1.200" d="M3.100 3.200h7.200M3.100 6h4.600"/><circle cx="11.400" cy="12" r="4.500" fill="#fff"/><circle cx="11.400" cy="12" r="2.600" fill="currentColor"/><circle cx="11.400" cy="12" r="3.100" fill="none" stroke="currentColor" stroke-width="1.400" stroke-dasharray="1.400 1.030"/><circle cx="11.400" cy="12" r="1.200" fill="#fff"/></svg></span><span class="fc"><svg class="fi" viewBox="0 0 16 16"><circle cx="2.500" cy="8" r="1.350" fill="currentColor"/><circle cx="8" cy="8" r="1.350" fill="currentColor"/><circle cx="13.500" cy="8" r="1.350" fill="currentColor"/></svg></span></div>
</div><div class="card" style="left:842.4px;top:912px">
<div class="ctitle"><span class="lm">wz</span>自定义字符串</div>
<div class="pv"><svg class="pic" viewBox="0 0 32 32"><circle cx="16" cy="16" r="16" fill="#0352ff"/><text x="16.300" y="24.300" text-anchor="middle" font-family="Liberation Serif, serif" font-style="italic" font-weight="bold" font-size="25" fill="#fff">i</text></svg><div class="plabel tr">wz自定义字...</div></div>
<div class="status"><span class="dot"></span>未上传</div>
<div class="foot"><span class="fc"><svg class="fi" viewBox="0 0 16 16"><rect x="5.800" y=".9" width="4.600" height="1.800" rx=".7" fill="currentColor"/><rect x="1.300" y="2.800" width="13.400" height="2.100" rx=".9" fill="currentColor"/><path fill="currentColor" d="M2.800 5.300h10.400v8a1.500 1.500 0 0 1-1.500 1.500H4.300a1.500 1.500 0 0 1-1.500-1.500z"/><path stroke="#fff" stroke-opacity=".55" stroke-width="1.200" d="M6.300 6.300v7M9.700 6.300v7"/></svg></span><span class="fc"><svg class="fi" viewBox="0 0 16 16"><path fill="currentColor" d="M2.200 2.200a1.300 1.300 0 0 1 1.300-1.300h6.600l4.100 4.100v8.700a1.300 1.300 0 0 1-1.300 1.300H3.500a1.300 1.300 0 0 1-1.300-1.300z"/><path d="M10.300 .6v4.300h4.300" fill="none" stroke="#fff" stroke-width=".9"/><path stroke="#fff" stroke-opacity=".85" stroke-width="1.100" d="M5.200 7.700h5.600M4.400 11.900h4.600"/><path stroke="#fff" stroke-width="2.600" d="M.9 3.500l14.300 9.600"/><path stroke="currentColor" stroke-width="1.200" d="M.7 3.400l14.600 9.800"/></svg></span><span class="fc"><svg class="fi" viewBox="0 0 16 16"><rect x="9" y="1.100" width="6.200" height="6" rx=".5" fill="currentColor"/><rect x="1" y="9.100" width="6.200" height="6" rx=".5" fill="currentColor"/><path fill="none" stroke="currentColor" stroke-width="1.600" d="M6.700 2.300C4.300 2.300 2.700 3.600 2.500 5.400M9.500 13.800c2.400 0 4-1.300 4.200-3.100"/><path fill="currentColor" d="M.8 4.400h3.600L2.500 7zM15.400 11.700h-3.600l1.900-2.600z"/></svg></span><span class="fc"><svg class="fi" viewBox="0 0 16 16"><rect x=".9" y=".9" width="11.600" height="13" rx="1" fill="currentColor"/><path stroke="#fff" stroke-opacity=".9" stroke-width="1.200" d="M3.100 3.200h7.200M3.100 6h4.600"/><circle cx="11.400" cy="12" r="4.500" fill="#fff"/><circle cx="11.400" cy="12" r="2.600" fill="currentColor"/><circle cx="11.400" cy="12" r="3.100" fill="none" stroke="currentColor" stroke-width="1.400" stroke-dasharray="1.400 1.030"/><circle cx="11.400" cy="12" r="1.200" fill="#fff"/></svg></span><span class="fc"><svg class="fi" viewBox="0 0 16 16"><circle cx="2.500" cy="8" r="1.350" fill="currentColor"/><circle cx="8" cy="8" r="1.350" fill="currentColor"/><circle cx="13.500" cy="8" r="1.350" fill="currentColor"/></svg></span></div>
</div><div class="card" style="left:1201.6px;top:912px">
<div class="ctitle">更多</div>
<div class="pv"><svg class="pic" viewBox="0 0 32 32"><circle cx="16" cy="16" r="16" fill="#0352ff"/><text x="16.300" y="24.300" text-anchor="middle" font-family="Liberation Serif, serif" font-style="italic" font-weight="bold" font-size="25" fill="#fff">i</text></svg><div class="plabel">更多</div></div>
<div class="status"><span class="dot"></span>未上传</div>
<div class="foot"><span class="fc"><svg class="fi" viewBox="0 0 16 16"><rect x="5.800" y=".9" width="4.600" height="1.800" rx=".7" fill="currentColor"/><rect x="1.300" y="2.800" width="13.400" height="2.100" rx=".9" fill="currentColor"/><path fill="currentColor" d="M2.800 5.300h10.400v8a1.500 1.500 0 0 1-1.500 1.500H4.300a1.500 1.500 0 0 1-1.500-1.500z"/><path stroke="#fff" stroke-opacity=".55" stroke-width="1.200" d="M6.300 6.300v7M9.700 6.300v7"/></svg></span><span class="fc"><svg class="fi" viewBox="0 0 16 16"><path fill="currentColor" d="M2.200 2.200a1.300 1.300 0 0 1 1.300-1.300h6.600l4.100 4.100v8.700a1.300 1.300 0 0 1-1.300 1.300H3.500a1.300 1.300 0 0 1-1.300-1.300z"/><path d="M10.300 .6v4.300h4.300" fill="none" stroke="#fff" stroke-width=".9"/><path stroke="#fff" stroke-opacity=".85" stroke-width="1.100" d="M5.200 7.700h5.600M4.400 11.900h4.600"/><path stroke="#fff" stroke-width="2.600" d="M.9 3.500l14.300 9.600"/><path stroke="currentColor" stroke-width="1.200" d="M.7 3.400l14.600 9.800"/></svg></span><span class="fc"><svg class="fi" viewBox="0 0 16 16"><rect x="9" y="1.100" width="6.200" height="6" rx=".5" fill="currentColor"/><rect x="1" y="9.100" width="6.200" height="6" rx=".5" fill="currentColor"/><path fill="none" stroke="currentColor" stroke-width="1.600" d="M6.700 2.300C4.300 2.300 2.700 3.600 2.500 5.400M9.500 13.800c2.400 0 4-1.300 4.200-3.100"/><path fill="currentColor" d="M.8 4.400h3.600L2.500 7zM15.400 11.700h-3.600l1.900-2.600z"/></svg></span><span class="fc"><svg class="fi" viewBox="0 0 16 16"><rect x=".9" y=".9" width="11.600" height="13" rx="1" fill="currentColor"/><path stroke="#fff" stroke-opacity=".9" stroke-width="1.200" d="M3.100 3.200h7.200M3.100 6h4.600"/><circle cx="11.400" cy="12" r="4.500" fill="#fff"/><circle cx="11.400" cy="12" r="2.600" fill="currentColor"/><circle cx="11.400" cy="12" r="3.100" fill="none" stroke="currentColor" stroke-width="1.400" stroke-dasharray="1.400 1.030"/><circle cx="11.400" cy="12" r="1.200" fill="#fff"/></svg></span><span class="fc"><svg class="fi" viewBox="0 0 16 16"><circle cx="2.500" cy="8" r="1.350" fill="currentColor"/><circle cx="8" cy="8" r="1.350" fill="currentColor"/><circle cx="13.500" cy="8" r="1.350" fill="currentColor"/></svg></span></div>
</div><div class="card" style="left:1560.8px;top:912px">
<div class="ctitle">金额颜色</div>
<div class="pv"><svg class="pic" viewBox="0 0 32 32"><circle cx="16" cy="16" r="16" fill="#0352ff"/><text x="16.300" y="24.300" text-anchor="middle" font-family="Liberation Serif, serif" font-style="italic" font-weight="bold" font-size="25" fill="#fff">i</text></svg><div class="plabel">金额颜色</div></div>
<div class="status"><span class="dot"></span>未上传</div>
<div class="foot"><span class="fc"><svg class="fi" viewBox="0 0 16 16"><rect x="5.800" y=".9" width="4.600" height="1.800" rx=".7" fill="currentColor"/><rect x="1.300" y="2.800" width="13.400" height="2.100" rx=".9" fill="currentColor"/><path fill="currentColor" d="M2.800 5.300h10.400v8a1.500 1.500 0 0 1-1.500 1.500H4.300a1.500 1.500 0 0 1-1.500-1.500z"/><path stroke="#fff" stroke-opacity=".55" stroke-width="1.200" d="M6.300 6.300v7M9.700 6.300v7"/></svg></span><span class="fc"><svg class="fi" viewBox="0 0 16 16"><path fill="currentColor" d="M2.200 2.200a1.300 1.300 0 0 1 1.300-1.300h6.600l4.100 4.100v8.700a1.300 1.300 0 0 1-1.300 1.300H3.500a1.300 1.300 0 0 1-1.300-1.300z"/><path d="M10.300 .6v4.300h4.300" fill="none" stroke="#fff" stroke-width=".9"/><path stroke="#fff" stroke-opacity=".85" stroke-width="1.100" d="M5.200 7.700h5.600M4.400 11.900h4.600"/><path stroke="#fff" stroke-width="2.600" d="M.9 3.500l14.300 9.600"/><path stroke="currentColor" stroke-width="1.200" d="M.7 3.400l14.600 9.800"/></svg></span><span class="fc"><svg class="fi" viewBox="0 0 16 16"><rect x="9" y="1.100" width="6.200" height="6" rx=".5" fill="currentColor"/><rect x="1" y="9.100" width="6.200" height="6" rx=".5" fill="currentColor"/><path fill="none" stroke="currentColor" stroke-width="1.600" d="M6.700 2.300C4.300 2.300 2.700 3.600 2.500 5.400M9.500 13.800c2.400 0 4-1.300 4.200-3.100"/><path fill="currentColor" d="M.8 4.400h3.600L2.500 7zM15.400 11.700h-3.600l1.900-2.600z"/></svg></span><span class="fc"><svg class="fi" viewBox="0 0 16 16"><rect x=".9" y=".9" width="11.600" height="13" rx="1" fill="currentColor"/><path stroke="#fff" stroke-opacity=".9" stroke-width="1.200" d="M3.100 3.200h7.200M3.100 6h4.600"/><circle cx="11.400" cy="12" r="4.500" fill="#fff"/><circle cx="11.400" cy="12" r="2.600" fill="currentColor"/><circle cx="11.400" cy="12" r="3.100" fill="none" stroke="currentColor" stroke-width="1.400" stroke-dasharray="1.400 1.030"/><circle cx="11.400" cy="12" r="1.200" fill="#fff"/></svg></span><span class="fc"><svg class="fi" viewBox="0 0 16 16"><circle cx="2.500" cy="8" r="1.350" fill="currentColor"/><circle cx="8" cy="8" r="1.350" fill="currentColor"/><circle cx="13.500" cy="8" r="1.350" fill="currentColor"/></svg></span></div>
</div>
</body></html>
